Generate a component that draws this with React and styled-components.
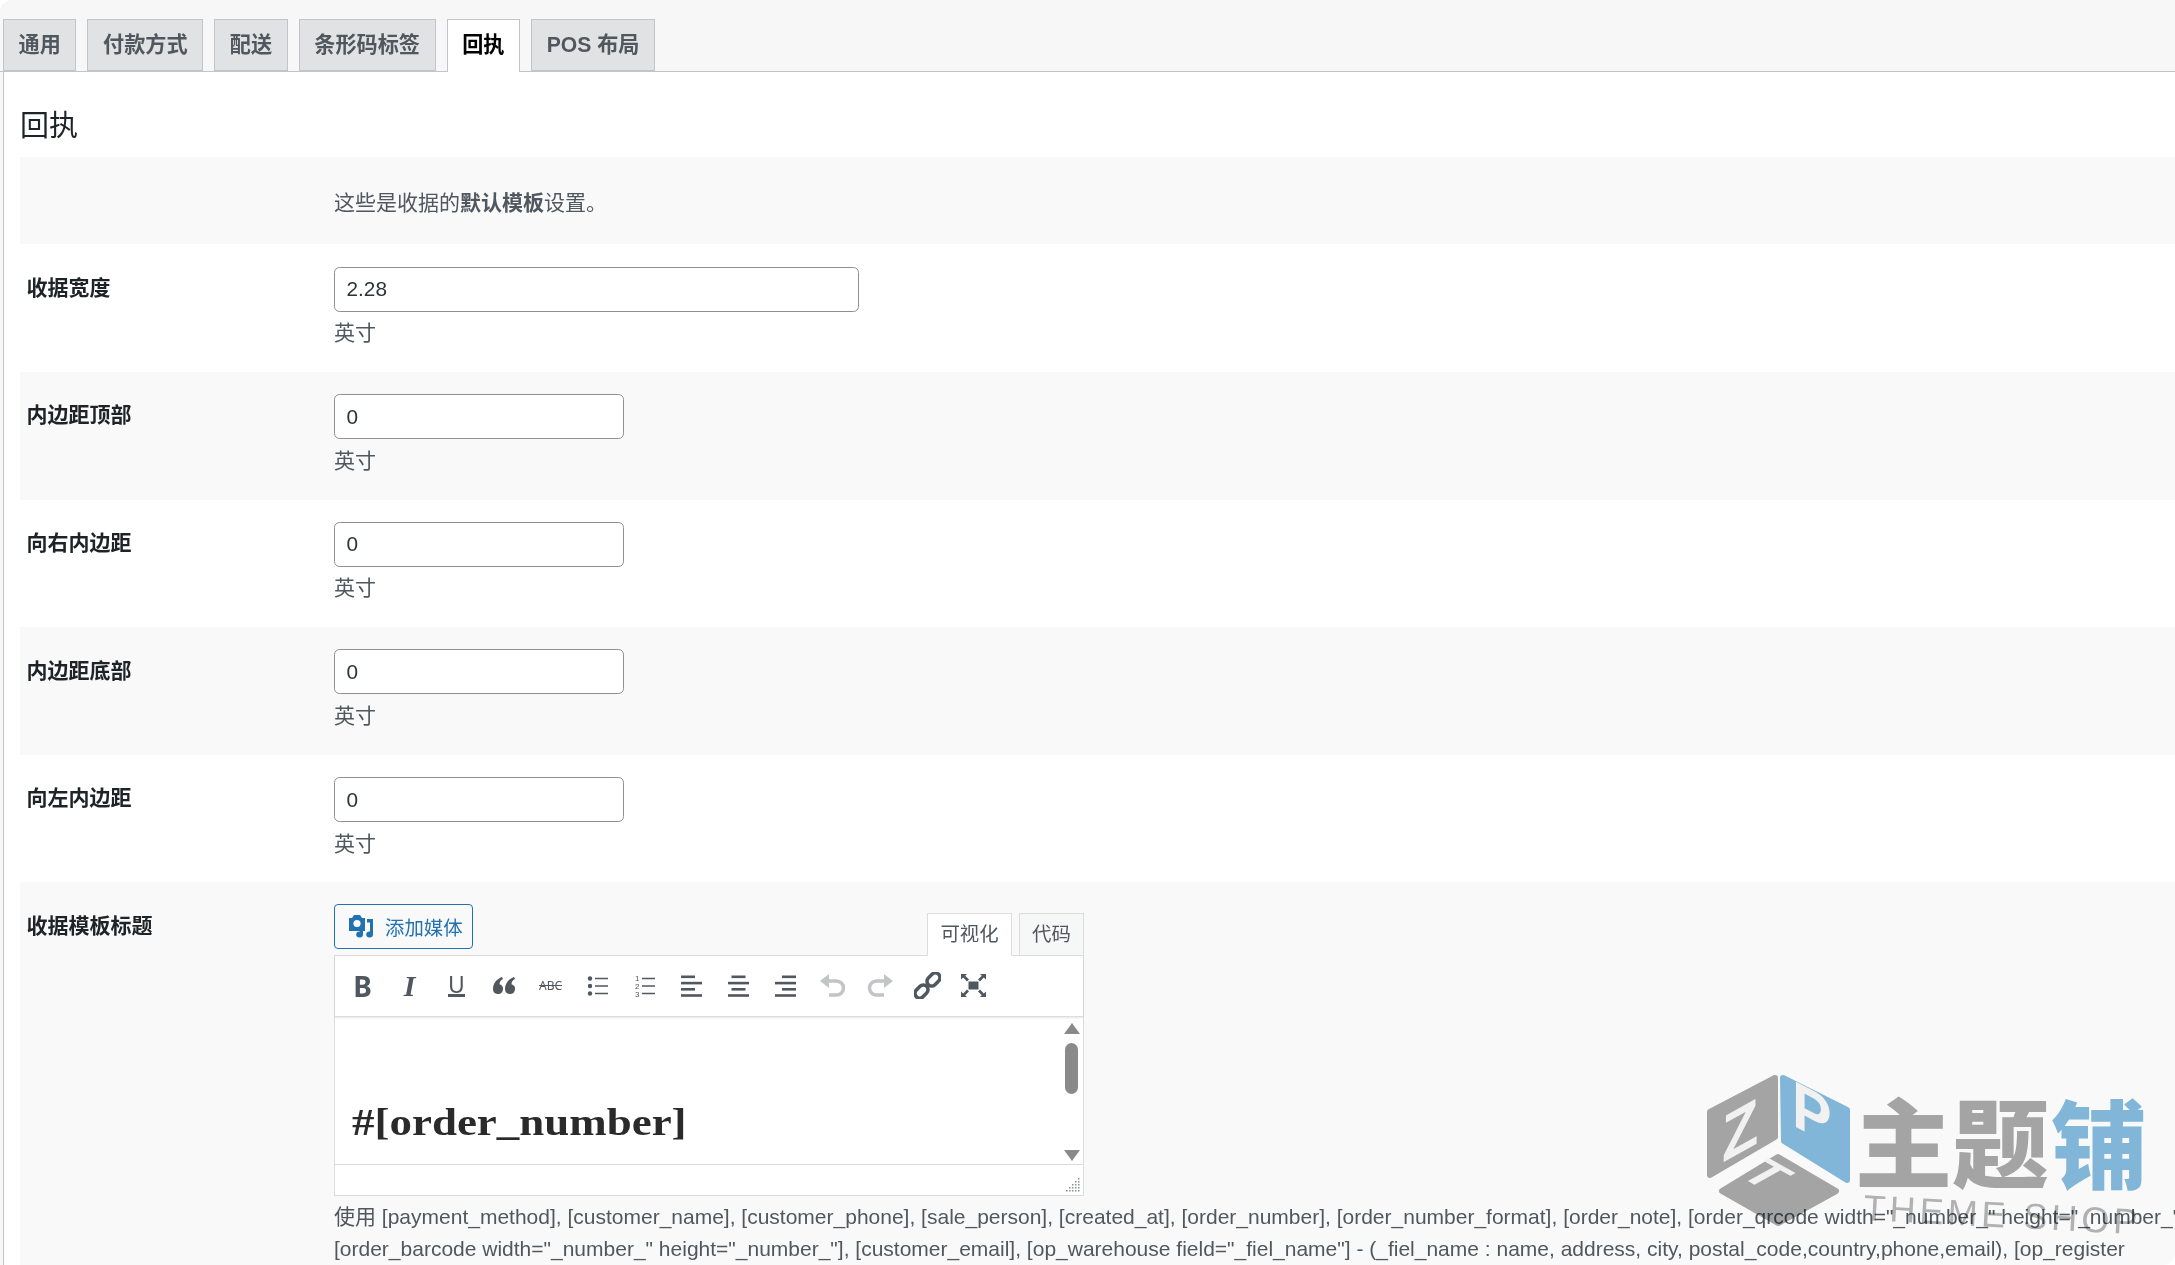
import React from "react";
import styled, { createGlobalStyle } from "styled-components";

const Global = createGlobalStyle`
  html, body {
    margin: 0;
    padding: 0;
    height: 100%;
    overflow: hidden;
    background: #fff;
  }
  body {
    font-family: "Liberation Sans", "Noto Sans CJK SC", sans-serif;
    font-size: 21px;
    color: #50575e;
  }
`;

const Page = styled.div`
  position: relative;
  width: 100vw;
  height: 100vh;
  overflow: hidden;
  display: flex;
  flex-direction: column;
  background: #f7f7f7;
  border-radius: 12px 0 12px 0;
`;

const TabBar = styled.nav`
  display: flex;
  gap: 11px;
  height: 52px;
  margin-top: 19px;
  padding-left: 3px;
  border-bottom: 1.5px solid #c3c4c7;
  flex-shrink: 0;
`;

const Tab = styled.div`
  height: ${(p) => (p.$active ? "53.5px" : "52px")};
  padding: 0 14.6px;
  font-size: 21.15px;
  font-weight: 700;
  line-height: 50px;
  border: 1.5px solid #c3c4c7;
  border-bottom: ${(p) => (p.$active ? "none" : "1.5px solid #c3c4c7")};
  background: ${(p) => (p.$active ? "#fff" : "#e1e2e3")};
  color: ${(p) => (p.$active ? "#000" : "#50575e")};
  box-sizing: border-box;
`;

const Panel = styled.main`
  flex: 1;
  margin-left: 3px;
  padding-left: 16px;
  border-left: 1.5px solid #c3c4c7;
  background: #fff;
  min-height: 0;
`;

const Heading = styled.h2`
  margin: 0;
  height: 85.4px;
  padding-top: 36px;
  box-sizing: border-box;
  font-size: 29px;
  font-weight: 400;
  line-height: 36px;
  color: #1d2327;
`;

const Row = styled.section`
  display: grid;
  grid-template-columns: 314px 1fr;
  box-sizing: border-box;
  height: ${(p) => (p.$height ? `${p.$height}px` : "127.6px")};
  background: ${(p) => (p.$striped ? "#f9f9f9" : "#fff")};
`;

const Label = styled.div`
  padding: 20.5px 0 0 6.5px;
  font-weight: 700;
  line-height: 46px;
  color: #1d2327;
`;

const Value = styled.div`
  padding-top: 22.3px;
  min-width: 0;
`;

const Intro = styled.p`
  margin: 0;
  padding-top: 31.5px;
  line-height: 28px;
`;

const Input = styled.input`
  display: block;
  box-sizing: border-box;
  width: ${(p) => p.$width}px;
  height: 45px;
  padding: 0 11.5px;
  font: 20.8px "Liberation Sans", sans-serif;
  color: #2c3338;
  background: #fff;
  border: 1.4px solid #8c8f94;
  border-radius: 5.5px;
`;

const Hint = styled.div`
  margin-top: 7.5px;
  line-height: 28px;
`;

const EditorHead = styled.div`
  display: flex;
  justify-content: space-between;
  align-items: flex-end;
  width: 750px;
  height: 51px;
  margin-top: -1px;
`;

const MediaButton = styled.button`
  display: flex;
  align-items: center;
  gap: 11px;
  align-self: flex-start;
  box-sizing: border-box;
  width: 139px;
  height: 45px;
  padding: 0 0 0 13px;
  font: 19.4px "Liberation Sans", "Noto Sans CJK SC", sans-serif;
  color: #2271b1;
  background: #f9f9f9;
  border: 1.4px solid #2271b1;
  border-radius: 4px;
  white-space: nowrap;
`;

const ModeTabs = styled.div`
  display: flex;
  gap: 7px;
  margin-bottom: -1.4px;
  position: relative;
`;

const ModeTab = styled.div`
  box-sizing: border-box;
  height: 43.4px;
  padding: 0 12.2px;
  font-size: 19.4px;
  line-height: 40px;
  border: 1.4px solid #dcdcde;
  border-bottom-color: ${(p) => (p.$active ? "#fff" : "#dcdcde")};
  background: ${(p) => (p.$active ? "#fff" : "#f6f7f7")};
`;

const Editor = styled.div`
  box-sizing: border-box;
  width: 750px;
  height: 241px;
  border: 1.4px solid #dcdcde;
  background: #fff;
  display: flex;
  flex-direction: column;
`;

const Toolbar = styled.div`
  display: flex;
  align-items: center;
  height: 60px;
  padding-left: 4px;
  border-bottom: 1.4px solid #dcdcde;
  box-shadow: 0 1px 2px rgba(0, 0, 0, 0.1);
  flex-shrink: 0;
`;

const ToolButton = styled.div`
  width: 47px;
  height: 40px;
  display: flex;
  align-items: center;
  justify-content: center;
  color: ${(p) => (p.$off ? "#c3c4c7" : "#50575e")};
`;

const GlyphB = styled.span`
  font: 700 28px "Noto Sans", sans-serif;
`;

const GlyphI = styled.span`
  font: italic 700 30px "Liberation Serif", serif;
`;

const GlyphU = styled.span`
  font: 400 23px/18px "Noto Sans", sans-serif;
  border-bottom: 3px solid #50575e;
  padding: 0 0 1px;
`;

const GlyphAbc = styled.span`
  font: 400 12px "Noto Sans", sans-serif;
  text-decoration: line-through;
`;

const Body = styled.div`
  flex: 1;
  display: flex;
  justify-content: space-between;
  min-height: 0;
  overflow: hidden;
`;

const OrderNumber = styled.h1`
  margin: 0;
  padding: 81px 0 0 17px;
  font: 700 37px/50px "Liberation Serif", serif;
  color: #2a2a2a;
  transform: scaleX(1.215);
  transform-origin: 17px 0;
`;

const ScrollTrack = styled.div`
  position: relative;
  width: 20px;
  margin-right: 1.5px;
`;

const ScrollArrow = styled.div`
  position: absolute;
  left: 2px;
  ${(p) => (p.$down ? "bottom: 3px;" : "top: 6px;")}
  width: 0;
  height: 0;
  border-left: 8px solid transparent;
  border-right: 8px solid transparent;
  ${(p) => (p.$down ? "border-top: 11px solid #8a8a8a;" : "border-bottom: 11px solid #8a8a8a;")}
`;

const ScrollThumb = styled.div`
  position: absolute;
  top: 26px;
  left: 3px;
  width: 13px;
  height: 51px;
  border-radius: 7px;
  background: #8a8a8a;
`;

const StatusBar = styled.div`
  display: flex;
  justify-content: flex-end;
  align-items: flex-end;
  height: 27px;
  padding: 0 3px 3px 0;
  border-top: 1.4px solid #dcdcde;
  flex-shrink: 0;
`;

const Help = styled.p`
  margin: 5px 0 0;
  line-height: 32px;
  white-space: nowrap;
`;

const Watermark = styled.svg`
  position: absolute;
  left: 1700px;
  top: 1065px;
  mix-blend-mode: multiply;
  filter: blur(0.7px);
  pointer-events: none;
`;

const UndoSvg = styled.svg`
  transform: ${(p) => (p.$flip ? "scaleX(-1)" : "none")};
`;

const LinkSvg = styled.svg`
  margin-left: 2px;
`;

const MediaIcon = () => (
  <svg width="26" height="25" viewBox="0 0 26 25">
    <path fill="#2271b1" d="M1 4h3l2-3h6l2 3h3v13H1z" />
    <circle cx="9" cy="9.5" r="3.6" fill="#fff" />
    <path fill="#2271b1" d="M19 5h6v15.5a3.4 3 0 1 1-3-3V8.5h-3z" />
    <path fill="#2271b1" d="M12 14.5h3v6a3.4 3 0 1 1-3-3z" />
  </svg>
);

const QuoteIcon = () => (
  <svg width="24" height="20" viewBox="0 0 24 20" fill="currentColor">
    <path d="M10 1C5 3 1 7 1 13a5 5 0 1 0 6.5-4.7C7.5 6 8.5 4 11 3z" />
    <path d="M22 1c-5 2-9 6-9 12a5 5 0 1 0 6.5-4.7C19.5 6 20.5 4 23 3z" />
  </svg>
);

const BulletIcon = () => (
  <svg width="22" height="22" viewBox="0 0 22 22" fill="currentColor">
    <circle cx="3" cy="3.5" r="2.2" />
    <circle cx="3" cy="11" r="2.2" />
    <circle cx="3" cy="18.5" r="2.2" />
    <path d="M8 2.7h13v1.6H8zM8 10.2h13v1.6H8zM8 17.7h13v1.6H8z" />
  </svg>
);

const NumberIcon = () => (
  <svg width="22" height="24" viewBox="0 0 22 24" fill="currentColor">
    <text x="1" y="7" fontSize="8" fontFamily="Liberation Sans">1</text>
    <text x="1" y="15" fontSize="8" fontFamily="Liberation Sans">2</text>
    <text x="1" y="23" fontSize="8" fontFamily="Liberation Sans">3</text>
    <path d="M8 3.7h13v1.6H8zM8 11.2h13v1.6H8zM8 18.7h13v1.6H8z" />
  </svg>
);

const AlignIcon = ({ side }) => {
  const short = 14;
  const shortX = side === "left" ? 0 : side === "center" ? 3.5 : 7;
  return (
    <svg width="21" height="22" viewBox="0 0 21 22" fill="currentColor">
      <rect x={shortX} y="0.5" width={short} height="2.6" />
      <rect x="0" y="6.8" width="21" height="2.6" />
      <rect x={shortX} y="13" width={short} height="2.6" />
      <rect x="0" y="19.2" width="21" height="2.6" />
    </svg>
  );
};

const UndoIcon = ({ flip }) => (
  <UndoSvg width="26" height="23" viewBox="0 0 26 23" $flip={flip}>
    <path d="M0 7 9 0v14z" fill="currentColor" />
    <path d="M8 7h8.5a7 7 0 0 1 0 14H9" fill="none" stroke="currentColor" strokeWidth="3.5" />
  </UndoSvg>
);

const LinkIcon = () => (
  <LinkSvg width="27" height="27" viewBox="0 0 26 26" fill="none" stroke="currentColor" strokeWidth="3.4">
    <rect x="-9.5" y="-4.5" width="14" height="9" rx="4.5" transform="translate(9 17) rotate(-45)" />
    <rect x="-4.5" y="-4.5" width="14" height="9" rx="4.5" transform="translate(17 9) rotate(-45)" />
  </LinkSvg>
);

const FullscreenIcon = () => (
  <svg width="25" height="23" viewBox="0 0 25 23" fill="currentColor">
    <rect x="7.5" y="7.5" width="10" height="8" />
    <path d="M0 0h6L4.2 1.8 8 5.6 6 7.4 2.2 3.6 0 5.6zM25 0h-6l1.8 1.8L17 5.6l2 1.8 3.8-3.8L25 5.6zM0 23h6l-1.8-1.8L8 17.4l-2-1.8-3.8 3.8L0 17.4zM25 23h-6l1.8-1.8-3.8-3.8 2-1.8 3.8 3.8 2.2-2z" />
  </svg>
);

const ResizeGrip = () => (
  <svg width="14" height="14" viewBox="0 0 14 14" fill="#8c8f94">
    {[0, 1, 2, 3, 4].flatMap((y) =>
      [0, 1, 2, 3, 4]
        .filter((x) => x + y >= 4)
        .map((x) => <rect key={`${x}-${y}`} x={x * 3} y={y * 3} width="1.5" height="1.5" />)
    )}
  </svg>
);

// watermark: cube plus shop name, letters stay real text
const ThemeShopMark = () => (
  <Watermark width="460" height="175" viewBox="0 0 460 175">
    <path fill="#a8a8a8" stroke="#a8a8a8" strokeWidth="6" strokeLinejoin="round" d="M75 13 10 47v63l65-38z" />
    <path fill="#85bbdf" stroke="#85bbdf" strokeWidth="6" strokeLinejoin="round" d="M83 13l64 32v70L84 76z" />
    <path fill="#a8a8a8" stroke="#a8a8a8" strokeWidth="6" strokeLinejoin="round" d="M78 92l58 34-58 32-56-32z" />
    <text transform="matrix(.9 -.5 0 1 22 98)" fontFamily="Liberation Sans" fontWeight="700" fontSize="66" fill="#f7f7f7">Z</text>
    <text transform="matrix(.9 .47 0 1 92 60)" fontFamily="Liberation Sans" fontWeight="700" fontSize="66" fill="#f7f7f7">P</text>
    <text transform="matrix(.9 .5 -.9 .5 80 100)" fontFamily="Liberation Sans" fontWeight="700" fontSize="50" fill="#f7f7f7" textAnchor="middle" dx="2" dy="34">T</text>
    <text x="155" y="115" fontFamily="Noto Sans CJK SC" fontWeight="900" fontSize="97" fill="#a8a8a8">主题</text>
    <text x="351" y="116" fontFamily="Noto Sans CJK SC" fontWeight="900" fontSize="96" fill="#85bbdf">铺</text>
    <text transform="translate(163 155) rotate(3)" fontFamily="Liberation Sans" fontSize="36" letterSpacing="4" fill="#b5b5b5">THEME SHOP</text>
  </Watermark>
);

const margins = [
  { label: "内边距顶部", striped: true },
  { label: "向右内边距", striped: false },
  { label: "内边距底部", striped: true },
  { label: "向左内边距", striped: false },
];

const tabs = ["通用", "付款方式", "配送", "条形码标签", "回执", "POS 布局"];

export default function App() {
  return (
    <Page>
      <Global />
      <TabBar>
        {tabs.map((t) => (
          <Tab key={t} $active={t === "回执"}>{t}</Tab>
        ))}
      </TabBar>
      <Panel>
        <Heading>回执</Heading>
        <Row $striped $height={87}>
          <div />
          <Intro>
            这些是收据的<b>默认模板</b>设置。
          </Intro>
        </Row>
        <Row>
          <Label>收据宽度</Label>
          <Value>
            <Input $width={525} defaultValue="2.28" />
            <Hint>英寸</Hint>
          </Value>
        </Row>
        {margins.map((m) => (
          <Row key={m.label} $striped={m.striped}>
            <Label>{m.label}</Label>
            <Value>
              <Input $width={290} defaultValue="0" />
              <Hint>英寸</Hint>
            </Value>
          </Row>
        ))}
        <Row $striped $height={400}>
          <Label>收据模板标题</Label>
          <Value>
            <EditorHead>
              <MediaButton>
                <MediaIcon />
                添加媒体
              </MediaButton>
              <ModeTabs>
                <ModeTab $active>可视化</ModeTab>
                <ModeTab>代码</ModeTab>
              </ModeTabs>
            </EditorHead>
            <Editor>
              <Toolbar>
                <ToolButton><GlyphB>B</GlyphB></ToolButton>
                <ToolButton><GlyphI>I</GlyphI></ToolButton>
                <ToolButton><GlyphU>U</GlyphU></ToolButton>
                <ToolButton><QuoteIcon /></ToolButton>
                <ToolButton><GlyphAbc>ABC</GlyphAbc></ToolButton>
                <ToolButton><BulletIcon /></ToolButton>
                <ToolButton><NumberIcon /></ToolButton>
                <ToolButton><AlignIcon side="left" /></ToolButton>
                <ToolButton><AlignIcon side="center" /></ToolButton>
                <ToolButton><AlignIcon side="right" /></ToolButton>
                <ToolButton $off><UndoIcon /></ToolButton>
                <ToolButton $off><UndoIcon flip /></ToolButton>
                <ToolButton><LinkIcon /></ToolButton>
                <ToolButton><FullscreenIcon /></ToolButton>
              </Toolbar>
              <Body>
                <OrderNumber>#[order_number]</OrderNumber>
                <ScrollTrack>
                  <ScrollArrow />
                  <ScrollThumb />
                  <ScrollArrow $down />
                </ScrollTrack>
              </Body>
              <StatusBar>
                <ResizeGrip />
              </StatusBar>
            </Editor>
            <Help>
              使用 [payment_method], [customer_name], [customer_phone], [sale_person], [created_at], [order_number], [order_number_format], [order_note], [order_qrcode width="_number_" height="_number_"],
              <br />
              [order_barcode width="_number_" height="_number_"], [customer_email], [op_warehouse field="_fiel_name"] - (_fiel_name : name, address, city, postal_code,country,phone,email), [op_register
            </Help>
          </Value>
        </Row>
      </Panel>
      <ThemeShopMark />
    </Page>
  );
}
